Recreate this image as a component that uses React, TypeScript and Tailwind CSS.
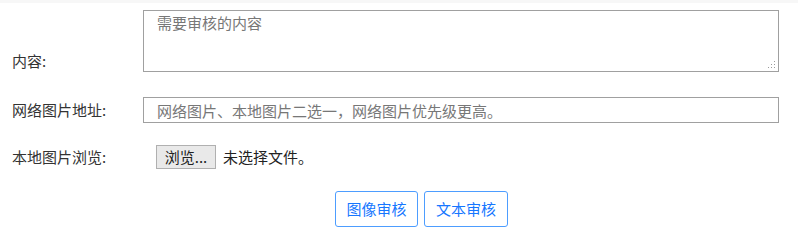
import React from 'react';

const font = { fontFamily: '"Noto Sans CJK SC", "Liberation Sans", sans-serif' };

export default function App() {
    return (
        <div className="w-[798px] h-[250px] bg-white text-[15px] text-[#333]" style={font}>
            <div className="h-[3px] bg-[#f7f7f7]" />
            <div className="pr-[19px] pt-[7px]">
                <div className="flex items-end">
                    <label className="w-[143px] pl-[12px] pb-[1px] leading-[20px]">内容:</label>
                    <div className="relative flex-1 flex">
                        <textarea
                            placeholder="需要审核的内容"
                            className="flex-1 h-[62px] resize-none border border-[#a0a0a0] px-[13px] pt-[1px] text-[15px] leading-[22px] text-[#333] placeholder:text-[#777] outline-none"
                        />
                        <svg className="absolute right-[3px] bottom-[3px]" width="8" height="8" viewBox="0 0 8 8">
                            <g fill="#9a9a9a">
                                <rect x="6" y="0" width="1" height="1" />
                                <rect x="3" y="3" width="1" height="1" />
                                <rect x="6" y="3" width="1" height="1" />
                                <rect x="0" y="6" width="1" height="1" />
                                <rect x="3" y="6" width="1" height="1" />
                                <rect x="6" y="6" width="1" height="1" />
                            </g>
                        </svg>
                    </div>
                </div>
                <div className="flex items-center mt-[25px]">
                    <label className="w-[143px] pl-[12px] leading-[20px]">网络图片地址:</label>
                    <input
                        placeholder="网络图片、本地图片二选一，网络图片优先级更高。"
                        className="flex-1 h-[26px] border border-[#a0a0a0] px-[13px] text-[15px] text-[#333] placeholder:text-[#777] outline-none"
                    />
                </div>
                <div className="flex items-center mt-[22px]">
                    <label className="w-[143px] pl-[12px] leading-[20px]">本地图片浏览:</label>
                    <div className="flex items-center pl-[13px]">
                        <span className="h-[24px] w-[60px] flex items-center justify-center bg-[#e9e9e9] border border-[#b0b0b0] text-[#222]">浏览...</span>
                        <span className="ml-[7px] text-[#222]">未选择文件。</span>
                    </div>
                </div>
                <div className="flex gap-[6px] pl-[335px] mt-[22px]">
                    <button className="w-[83px] h-[36px] rounded-[3px] border border-[#4d9dff] text-[#1677ff] bg-white">图像审核</button>
                    <button className="w-[84px] h-[36px] rounded-[3px] border border-[#4d9dff] text-[#1677ff] bg-white">文本审核</button>
                </div>
            </div>
        </div>
    );
}
